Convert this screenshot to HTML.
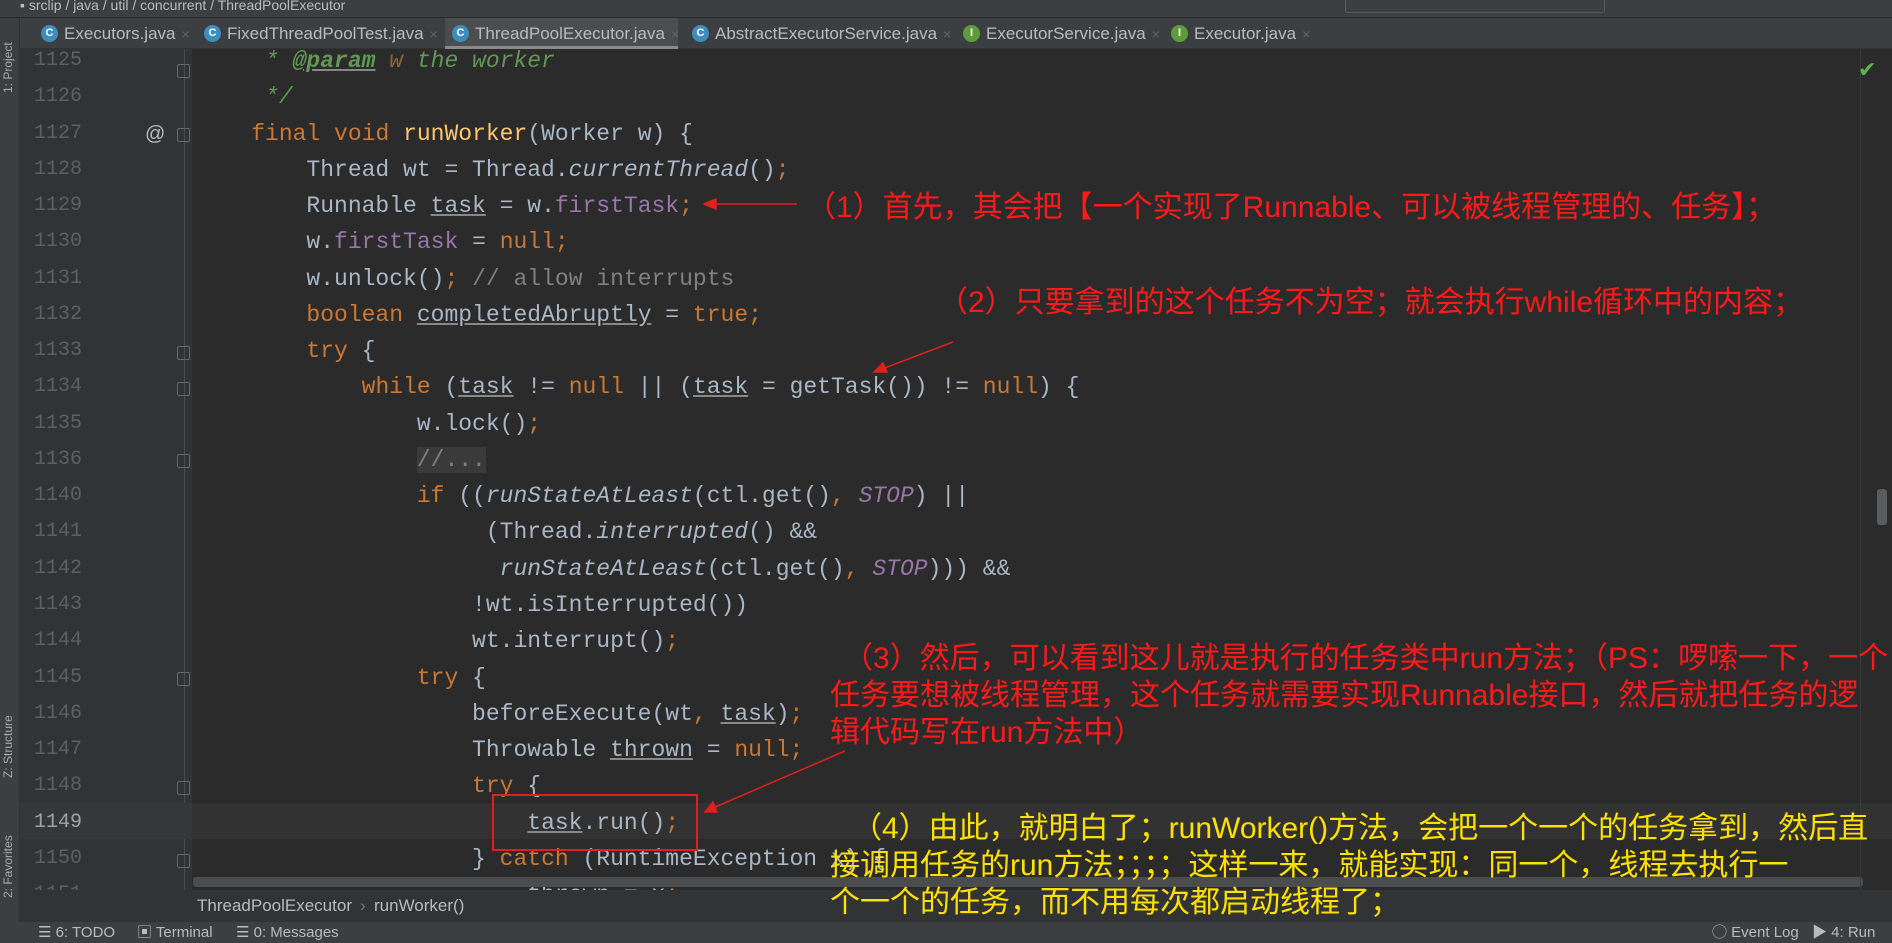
<!DOCTYPE html>
<html><head><meta charset="utf-8"><style>
*{margin:0;padding:0;box-sizing:border-box}
body{width:1892px;height:943px;overflow:hidden;background:#2b2b2b;position:relative;font-family:"Liberation Sans","Noto Sans CJK SC",sans-serif}
.abs{position:absolute}
#title{left:0;top:0;width:1892px;height:18px;background:#3c3f41;border-bottom:1px solid #2b2b2b;color:#bbb;font-size:14px;line-height:10px;overflow:hidden}
#tabs{left:20px;top:18px;width:1872px;height:31px;background:#3c3f41;border-bottom:1px solid #323232}
.tab{position:absolute;top:0;height:31px;color:#bbb;font-size:17px;line-height:31px;padding-left:30px;white-space:nowrap}
.tab .ic{position:absolute;left:7px;top:7px;width:17px;height:17px;border-radius:50%;background:#3d8dbf;color:#fff;font-size:11px;line-height:17px;text-align:center;font-weight:bold}
.tab .ic.i{background:#5f9b3b}
.tab .x{color:#666;margin-left:6px;font-size:14px}
.tab.act{background:#4b4d4f;border-bottom:3px solid #8a8a8a}
#strip{left:0;top:18px;width:20px;height:904px;background:#3c3f41;border-right:1px solid #323232}
#gutter{left:20px;top:49px;width:172px;height:841px;background:#313335}
#editor{left:0;top:49px;width:1892px;height:841px;overflow:hidden}
.row{position:absolute;left:0;width:1892px;height:36.26px;line-height:36.26px}
.ln{position:absolute;left:20px;width:62px;text-align:right;color:#5d6062;font-family:"Liberation Mono",monospace;font-size:20px}
.code{position:absolute;left:196px;white-space:pre;font-family:"Liberation Mono",monospace;font-size:23px;color:#a9b7c6}
.k{color:#cc7832}.c{color:#808080}.jd{color:#629755;font-style:italic}.m{color:#ffc66d}.f{color:#9876aa}.it{font-style:italic}.u{text-decoration:underline;text-decoration-color:#888}.st{color:#9876aa;font-style:italic}
.fold{position:absolute;left:177px;width:13px;height:14px;border:1px solid #666;border-radius:2px}
.ann{position:absolute;white-space:nowrap;font-family:"Liberation Sans","Noto Sans CJK SC",sans-serif;font-size:30px}
.red{color:#ff1a1a}.yel{color:#ffe100}
#crumb{left:20px;top:890px;width:1872px;height:32px;background:#313335;color:#bbb;font-size:17px;line-height:32px}
#status{left:0;top:922px;width:1892px;height:21px;background:#3c3f41;color:#bbb;font-size:15px;line-height:21px}
</style></head><body>
<div id="editor" class="abs">
<div id="gutter" class="abs" style="top:0"></div>
<div class="abs" style="left:184px;top:0;width:1px;height:841px;background:#4a4a4a"></div>
<div class="abs" style="left:192px;top:754px;width:1870px;height:36px;background:#323232"></div>
<div class="abs" style="left:20px;top:754px;width:172px;height:36px;background:#353739"></div>
<div class="row" style="top:-6px"><span class="ln">1125</span><span class="code jd">     * <b class="u" style="font-weight:bold">@param</b> <span style="color:#8a653b">w</span> the worker</span></div>
<div class="row" style="top:30px"><span class="ln">1126</span><span class="code jd">     */</span></div>
<div class="row" style="top:66.5px"><span class="ln">1127</span><span class="abs" style="left:145px;color:#bbb;font-size:20px">@</span><span class="code">    <span class="k">final void</span> <span class="m">runWorker</span>(Worker w) {</span></div>
<div class="row" style="top:102.8px"><span class="ln">1128</span><span class="code">        Thread wt = Thread.<span class="it">currentThread</span>()<span class="k">;</span></span></div>
<div class="row" style="top:139px"><span class="ln">1129</span><span class="code">        Runnable <span class="u">task</span> = w.<span class="f">firstTask</span><span class="k">;</span></span></div>
<div class="row" style="top:175.3px"><span class="ln">1130</span><span class="code">        w.<span class="f">firstTask</span> = <span class="k">null;</span></span></div>
<div class="row" style="top:211.6px"><span class="ln">1131</span><span class="code">        w.unlock()<span class="k">;</span> <span class="c">// allow interrupts</span></span></div>
<div class="row" style="top:247.8px"><span class="ln">1132</span><span class="code">        <span class="k">boolean</span> <span class="u">completedAbruptly</span> = <span class="k">true;</span></span></div>
<div class="row" style="top:284px"><span class="ln">1133</span><span class="code">        <span class="k">try</span> {</span></div>
<div class="row" style="top:320.3px"><span class="ln">1134</span><span class="code">            <span class="k">while</span> (<span class="u">task</span> != <span class="k">null</span> || (<span class="u">task</span> = getTask()) != <span class="k">null</span>) {</span></div>
<div class="row" style="top:356.6px"><span class="ln">1135</span><span class="code">                w.lock()<span class="k">;</span></span></div>
<div class="row" style="top:392.9px"><span class="ln">1136</span><span class="code c">                <span style="background:#3a3a3a">//...</span></span></div>
<div class="row" style="top:429.1px"><span class="ln">1140</span><span class="code">                <span class="k">if</span> ((<span class="it">runStateAtLeast</span>(ctl.get()<span class="k">,</span> <span class="st">STOP</span>) ||</span></div>
<div class="row" style="top:465.4px"><span class="ln">1141</span><span class="code">                     (Thread.<span class="it">interrupted</span>() &amp;&amp;</span></div>
<div class="row" style="top:501.7px"><span class="ln">1142</span><span class="code">                      <span class="it">runStateAtLeast</span>(ctl.get()<span class="k">,</span> <span class="st">STOP</span>))) &amp;&amp;</span></div>
<div class="row" style="top:537.9px"><span class="ln">1143</span><span class="code">                    !wt.isInterrupted())</span></div>
<div class="row" style="top:574.2px"><span class="ln">1144</span><span class="code">                    wt.interrupt()<span class="k">;</span></span></div>
<div class="row" style="top:610.5px"><span class="ln">1145</span><span class="code">                <span class="k">try</span> {</span></div>
<div class="row" style="top:646.7px"><span class="ln">1146</span><span class="code">                    beforeExecute(wt<span class="k">,</span> <span class="u">task</span>)<span class="k">;</span></span></div>
<div class="row" style="top:683px"><span class="ln">1147</span><span class="code">                    Throwable <span class="u">thrown</span> = <span class="k">null;</span></span></div>
<div class="row" style="top:719.3px"><span class="ln">1148</span><span class="code">                    <span class="k">try</span> {</span></div>
<div class="row" style="top:755.6px"><span class="ln" style="color:#a4a3a3">1149</span><span class="code">                        <span class="u">task</span>.run()<span class="k">;</span></span></div>
<div class="row" style="top:791.8px"><span class="ln">1150</span><span class="code">                    } <span class="k">catch</span> (RuntimeException x) {</span></div>
<div class="row" style="top:828px"><span class="ln">1151</span><span class="code">                        thrown = x<span class="k">;</span></span></div>
<div class="fold" style="top:15px"></div><div class="fold" style="top:79px"></div><div class="fold" style="top:297px"></div><div class="fold" style="top:333px"></div><div class="fold" style="top:405px"></div><div class="fold" style="top:623px"></div><div class="fold" style="top:732px"></div><div class="fold" style="top:805px"></div>
<div class="abs" style="left:193px;top:828px;width:1670px;height:10px;background:#4a4c4e;border-radius:3px"></div>
<div class="abs" style="left:1860px;top:0;width:1px;height:841px;background:#3a3a3a"></div>
<div class="abs" style="left:1877px;top:440px;width:10px;height:36px;background:#5a5c5e;border-radius:3px"></div>
<div class="abs" style="left:1858px;top:8px;color:#5fb34a;font-size:22px">✔</div>
</div>
<div id="title" class="abs"><span style="position:absolute;left:20px;top:0">▪ srclip  /  java  /  util  /  concurrent  /  ThreadPoolExecutor</span><span style="position:absolute;left:1345px;top:-3px;width:260px;height:16px;border:1px solid #5a5a5a;border-radius:3px"></span></div>
<div id="strip" class="abs"><div style="position:absolute;left:1px;top:75px;transform:rotate(-90deg);transform-origin:left top;color:#aaa;font-size:12px;white-space:nowrap">1: Project</div>
<div style="position:absolute;left:1px;top:760px;transform:rotate(-90deg);transform-origin:left top;color:#aaa;font-size:12px;white-space:nowrap">Z: Structure</div>
<div style="position:absolute;left:1px;top:880px;transform:rotate(-90deg);transform-origin:left top;color:#aaa;font-size:12px;white-space:nowrap">2: Favorites</div></div>
<div id="tabs" class="abs">
<div class="tab" style="left:14px;width:148px"><span class="ic">C</span>Executors.java<span class="x">×</span></div>
<div class="tab" style="left:177px;width:238px"><span class="ic">C</span>FixedThreadPoolTest.java<span class="x">×</span></div>
<div class="tab act" style="left:425px;width:233px"><span class="ic">C</span>ThreadPoolExecutor.java<span class="x">×</span></div>
<div class="tab" style="left:665px;width:258px"><span class="ic">C</span>AbstractExecutorService.java<span class="x">×</span></div>
<div class="tab" style="left:936px;width:190px"><span class="ic i">I</span>ExecutorService.java<span class="x">×</span></div>
<div class="tab" style="left:1144px;width:132px"><span class="ic i">I</span>Executor.java<span class="x">×</span></div>
</div>
<div id="crumb" class="abs"><span style="position:absolute;left:177px">ThreadPoolExecutor</span><span style="position:absolute;left:340px;color:#777">›</span><span style="position:absolute;left:354px">runWorker()</span></div>
<div id="status" class="abs"><span style="position:absolute;left:38px">☰ 6: TODO</span><span style="position:absolute;left:137px">▣ Terminal</span><span style="position:absolute;left:236px">☰ 0: Messages</span><span style="position:absolute;left:1712px">◯ Event Log</span><span style="position:absolute;left:1812px">▶ 4: Run</span></div>
<div class="abs" style="left:492px;top:794px;width:206px;height:57px;border:2px solid #e0201c"></div>
<svg class="abs" style="left:0;top:0" width="1892" height="943">
<g stroke="#e0201c" stroke-width="1.5" fill="#e0201c">
<line x1="797" y1="204" x2="712" y2="204"/><polygon points="704,204 716,199 716,209"/>
<line x1="953" y1="342" x2="882" y2="369"/><polygon points="874,372 883,363 887,372"/>
<line x1="845" y1="751" x2="713" y2="808"/><polygon points="705,812 713,802 717,812"/>
</g></svg>
<div class="ann red" style="left:806px;top:182px">（1）首先，其会把【一个实现了Runnable、可以被线程管理的、任务】；</div>
<div class="ann red" style="left:938px;top:277px">（2）只要拿到的这个任务不为空；就会执行while循环中的内容；</div>
<div class="ann red" style="left:843px;top:633px">（3）然后，可以看到这儿就是执行的任务类中run方法；（PS：啰嗦一下，一个</div>
<div class="ann red" style="left:830px;top:670px">任务要想被线程管理，这个任务就需要实现Runnable接口，然后就把任务的逻</div>
<div class="ann red" style="left:830px;top:707px">辑代码写在run方法中）</div>
<div class="ann yel" style="left:852px;top:803px">（4）由此，就明白了；runWorker()方法，会把一个一个的任务拿到，然后直</div>
<div class="ann yel" style="left:830px;top:840px">接调用任务的run方法；；；；这样一来，就能实现：同一个，线程去执行一</div>
<div class="ann yel" style="left:830px;top:877px">个一个的任务，而不用每次都启动线程了；</div>
</body></html>
